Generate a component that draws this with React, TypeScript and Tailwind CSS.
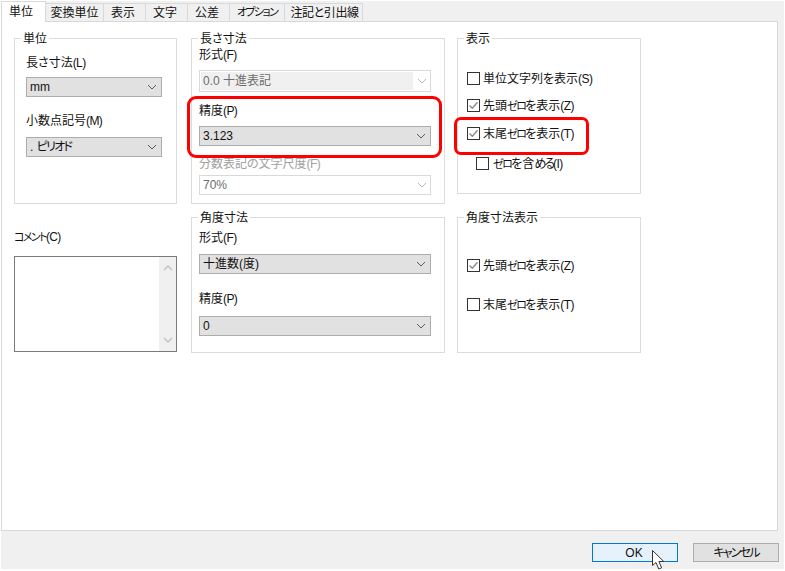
import React from "react";

function T({ text }: { text: string }) {
  const parts = text.split(/(コメント|ゼロ|める|ピリオド|オプション|キャンセル|\([A-Z]\))/).filter(Boolean);
  return (
    <>
      {parts.map((p, i) => {
        let cls = "";
        if (p.startsWith("(")) cls = "tracking-[-0.6px]";
        else if (p === "ゼロ") cls = "text-[11px] tracking-[-1.6px]";
        else if (p === "める") cls = "tracking-[-2px]";
        else if (p === "コメント" || p === "オプション") cls = "text-[11px] tracking-[-1.6px]";
        else if (p === "ピリオド" || p === "キャンセル") cls = "tracking-[-1.8px]";
        return cls ? <span key={i} className={cls}>{p}</span> : <span key={i}>{p}</span>;
      })}
    </>
  );
}

function Chevron({ light }: { light?: boolean }) {
  return (
    <svg width="10" height="6" viewBox="0 0 10 6" className="shrink-0" fill="none">
      <path d="M1 1 L5 5 L9 1" stroke={light ? "#bdbdbd" : "#5c5c5c"} strokeWidth="1" />
    </svg>
  );
}

function Select({ value, h = "h-5" }: { value: string; h?: string }) {
  return (
    <div className={`${h} flex items-center justify-between border border-[#adadad] bg-[#e1e1e1] pl-[3px] pr-[4px] text-[12px] text-[#111]`}>
      <span><T text={value} /></span>
      <Chevron />
    </div>
  );
}

function DisabledSelect({ value, inner, h = "h-5" }: { value: string; inner?: boolean; h?: string }) {
  return (
    <div className={`${h} flex items-stretch border border-[#d9d9d9] bg-white p-[1px] text-[12px] text-[#6d6d6d]`}>
      <div className={`flex flex-1 items-center pl-[2px] ${inner ? "bg-[#f0f0f0]" : ""}`}>{value}</div>
      <div className="flex w-[16px] items-center justify-center pl-[1px]">
        <Chevron light />
      </div>
    </div>
  );
}

function Label({ text, className = "text-[#111]" }: { text: string; className?: string }) {
  return <div className={`h-4 text-[12px] leading-[18px] ${className}`}><T text={text} /></div>;
}

function Group({ title, left, className, children }: { title: string; left: string; className: string; children: React.ReactNode }) {
  return (
    <div className={`relative border border-[#dcdcdc] ${className}`}>
      <span className={`absolute top-[-8px] ${left} bg-white px-[2px] text-[12px] leading-4 text-[#111]`}>{title}</span>
      {children}
    </div>
  );
}

function Check({ label, checked, className = "", gap = "gap-[3px]" }: { label: string; checked?: boolean; className?: string; gap?: string }) {
  return (
    <div className={`flex h-4 items-center ${gap} text-[12px] text-[#111] ${className}`}>
      <div className="flex h-[13px] w-[13px] shrink-0 items-center justify-center border border-[#333] bg-white">
        {checked && (
          <svg width="11" height="11" viewBox="0 0 11 11" fill="none">
            <path d="M1.5 5.5 L4.3 8.3 L9.5 2.2" stroke="#8a8a8a" strokeWidth="1.4" />
          </svg>
        )}
      </div>
      <span className="h-4 leading-[18px]"><T text={label} /></span>
    </div>
  );
}

const tabs: [string, string][] = [
  ["変換単位", "w-[58px]"],
  ["表示", "w-[42px] pr-[3px]"],
  ["文字", "w-[42px] pr-[3px]"],
  ["公差", "w-[42px] pr-[3px]"],
  ["オプション", "w-[55px]"],
  ["注記と引出線", "w-[78px] pl-[2px] tracking-[-0.4px]"],
];

export default function App() {
  return (
    <div className="relative h-[571px] w-[785px] overflow-hidden bg-white pl-px pt-px font-['Liberation_Sans','Noto_Sans_CJK_JP',sans-serif] [font-feature-settings:'palt']">
      <div className="flex h-[568px] w-[783px] flex-col bg-[#f0f0f0]">
        <div className="flex h-5 items-end">
          <div className="relative z-10 -mb-px flex h-[21px] w-[45px] items-center justify-center border-x border-t border-[#d9d9d9] bg-white pb-[1px] pr-[5px] text-[12px] text-[#111]">
            単位
          </div>
          {tabs.map(([t, w]) => (
            <div key={t} className={`flex h-[18px] ${w} items-center justify-center border-r border-t border-[#d9d9d9] text-[12px] text-[#111]`}>
              <T text={t} />
            </div>
          ))}
        </div>

        <div className="flex h-[510px] w-[777px] items-start border border-[#d9d9d9] bg-white pl-[12px] pt-[16px]">
          <div className="w-[163px] shrink-0">
            <Group title="単位" left="left-[6px]" className="h-[166px] pl-[11px]">
              <Label text="長さ寸法(L)" className="mt-[15px] text-[#111]" />
              <div className="mt-[7px] w-[136px]"><Select value="mm" /></div>
              <Label text="小数点記号(M)" className="mt-[15px] text-[#111]" />
              <div className="mt-[9px] w-[136px]"><Select value=". ピリオド" /></div>
            </Group>
            <Label text="コメント(C)" className="mt-[24px] text-[#111]" />
            <div className="mt-[12px] flex h-[96px] w-[163px] justify-end border border-[#7a7a7a] bg-white">
              <div className="flex w-[17px] flex-col items-center justify-between bg-[#f0f0f0] py-[8px]">
                <svg width="10" height="6" viewBox="0 0 10 6" fill="none"><path d="M1 5 L5 1 L9 5" stroke="#c4c4c4" strokeWidth="1.5" /></svg>
                <svg width="10" height="6" viewBox="0 0 10 6" fill="none"><path d="M1 1 L5 5 L9 1" stroke="#c4c4c4" strokeWidth="1.5" /></svg>
              </div>
            </div>
          </div>

          <div className="ml-[14px] w-[254px] shrink-0">
            <Group title="長さ寸法" left="left-[6px]" className="h-[166px] pl-[7px]">
              <Label text="形式(F)" className="mt-[7px] text-[#111]" />
              <div className="mt-[8px] w-[232px]"><DisabledSelect value="0.0 十進表記" inner h="h-[22px]" /></div>
              <Label text="精度(P)" className="mt-[10px] text-[#111]" />
              <div className="mt-[8px] w-[232px]"><Select value="3.123" /></div>
              <Label text="分数表記の文字尺度(F)" className="mt-[9px] text-[#a0a0a0]" />
              <div className="mt-[4px] w-[232px]"><DisabledSelect value="70%" /></div>
            </Group>
            <Group title="角度寸法" left="left-[6px]" className="mt-[13px] h-[136px] pl-[7px]">
              <Label text="形式(F)" className="mt-[11px] text-[#111]" />
              <div className="mt-[9px] w-[232px]"><Select value="十進数(度)" /></div>
              <Label text="精度(P)" className="mt-[16px] text-[#111]" />
              <div className="mt-[10px] w-[232px]"><Select value="0" /></div>
            </Group>
          </div>

          <div className="ml-[12px] w-[184px] shrink-0">
            <Group title="表示" left="left-[6px]" className="h-[156px] pl-[9px]">
              <Check label="単位文字列を表示(S)" className="mt-[31px]" />
              <Check label="先頭ゼロを表示(Z)" checked className="mt-[11px]" />
              <Check label="末尾ゼロを表示(T)" checked className="mt-[12px]" />
              <Check label="ゼロを含める(I)" className="ml-[9px] mt-[14px]" gap="gap-[4px]" />
            </Group>
            <Group title="角度寸法表示" left="left-[6px]" className="mt-[23px] h-[136px] pl-[9px]">
              <Check label="先頭ゼロを表示(Z)" checked className="mt-[39px]" />
              <Check label="末尾ゼロを表示(T)" className="mt-[23px]" />
            </Group>
          </div>
        </div>

        <div className="flex justify-end gap-[15px] pr-[5px] pt-[12px]">
          <button className="flex h-[19px] w-[86px] items-center justify-center border border-[#0078d7] bg-[#e5f1fb] pr-[2px] text-[12px] text-[#111]">OK</button>
          <button className="flex h-[19px] w-[86px] items-center justify-center border border-[#adadad] bg-[#e1e1e1] text-[12px] text-[#111]"><T text="キャンセル" /></button>
        </div>
      </div>

      <div className="pointer-events-none absolute left-[187px] top-[96px] h-[62px] w-[255px] rounded-[9px] border-[3px] border-[#ff0000]" />
      <div className="pointer-events-none absolute left-[454px] top-[117px] h-[38px] w-[135px] rounded-[7px] border-[3px] border-[#ff0000]" />

      <svg className="absolute left-[651px] top-[549px]" width="16" height="22" viewBox="0 0 16 22">
        <path d="M1.5 1.5 L1.5 16.5 L5 13.5 L7.8 20 L10.6 18.8 L7.9 12.5 L12.8 12.5 Z" fill="#fff" stroke="#333" strokeWidth="1" strokeLinejoin="round" />
      </svg>
    </div>
  );
}
